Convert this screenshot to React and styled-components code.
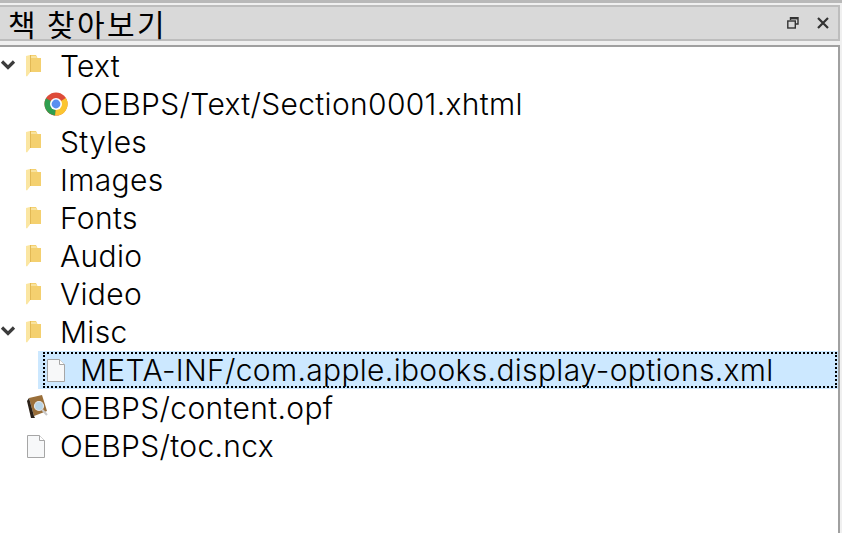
import styled, { createGlobalStyle } from "styled-components";

const Global = createGlobalStyle`
  html, body { margin: 0; padding: 0; background: #f0f0f0; }
  body { font-family: "Inter", "Noto Sans CJK KR", sans-serif; }
`;

const Dock = styled.div`
  width: 842px;
  height: 533px;
  display: flex;
  flex-direction: column;
  overflow: hidden;
  background: #f0f0f0;
  border-top: 3px solid #b9b9b9;
  box-sizing: border-box;
`;

const TitleBar = styled.div`
  height: 36px;
  margin-top: 2px;
  margin-right: 2px;
  display: flex;
  align-items: center;
  background: #d9d9d9;
  border: 2px solid #bdbdbd;
  border-left: 0;
  box-sizing: border-box;
  flex: none;
`;

const Title = styled.h1`
  flex: 1;
  margin: 0;
  padding-left: 8px;
  font: 400 30px/32px "Noto Sans CJK KR", sans-serif;
  letter-spacing: 2.4px;
  color: #000;
`;

const TitleButton = styled.button`
  width: 30px;
  height: 30px;
  padding: 0;
  border: 0;
  background: none;
  display: flex;
  align-items: center;
  justify-content: center;
`;

const Tree = styled.ul`
  flex: 1;
  list-style: none;
  margin: 4px 2px 0 0;
  padding: 0;
  background: #fff;
  border-top: 2px solid #a0a0a0;
  border-right: 2px solid #a0a0a0;
`;

const Row = styled.li`
  height: 38px;
  display: flex;
  align-items: center;
  padding-left: ${(p) => (p.$child ? 38 : 0)}px;
  box-sizing: border-box;
  color: #000;
`;

const RowInner = styled.div`
  position: relative;
  flex: 1;
  height: 38px;
  display: flex;
  align-items: center;
  box-sizing: border-box;
  background: ${(p) => (p.$selected ? "#cce8ff" : "transparent")};

  &::after {
    content: "";
    display: ${(p) => (p.$selected ? "block" : "none")};
    position: absolute;
    inset: 1px 1px 1px 5px;
    border: 2px dotted #000;
  }
`;

const Arrow = styled.span`
  width: 25px;
  height: 38px;
  flex: none;
  display: flex;
  align-items: center;
  padding: 0 0 3px 0;
  box-sizing: border-box;
`;

const IconSlot = styled.span`
  width: ${(p) => (p.$child ? 42 : 35)}px;
  flex: none;
  display: flex;
  align-items: center;
  padding-left: ${(p) => p.$inset}px;
  box-sizing: border-box;
`;

const Label = styled.span`
  font-size: 30px;
  font-weight: 300;
  line-height: 38px;
  letter-spacing: 0.33px;
  white-space: nowrap;
`;

const Chevron = () => (
  <svg width="16" height="10" viewBox="0 0 16 10">
    <path d="M2 1.5 L8 7.5 L14 1.5" fill="none" stroke="#3c3c3c" strokeWidth="3.2" />
  </svg>
);

const FolderIcon = () => (
  <svg width="16" height="22" viewBox="0 0 16 22">
    <path d="M5 0 H11 L12.5 3 H16 V17 H5 Z" fill="#f4d06f" />
    <path d="M5 1 H11 L12 3 H5 Z" fill="#f8e3a0" />
    <path d="M1 1 L5 0 V17.5 L2 21.5 L1 21 Z" fill="#fbe6a2" />
    <path d="M5 0 L6 0 V17 H5 Z" fill="#e2b955" />
  </svg>
);

const FileIcon = () => (
  <svg width="18" height="23" viewBox="0 0 18 23">
    <path d="M0.5 0.5 H12.5 L17.5 5.5 V22.5 H0.5 Z" fill="#f7f8f9" stroke="#a6a6a6" />
    <path d="M12.5 0.5 V5.5 H17.5" fill="#fff" stroke="#a6a6a6" />
  </svg>
);

const ChromeIcon = () => (
  <svg width="24" height="24" viewBox="0 0 24 24">
    <circle cx="12" cy="12" r="11.5" fill="#dd4b39" />
    <path d="M12 12 L21.9 6 A11.5 11.5 0 0 1 11 23.5 Z" fill="#fbc531" />
    <path d="M12 12 L11 23.5 A11.5 11.5 0 0 1 2 6.3 Z" fill="#2f9e4f" />
    <circle cx="12" cy="12" r="6" fill="#fff" />
    <circle cx="12" cy="12" r="4.4" fill="#5a8ff0" />
  </svg>
);

const OpfIcon = () => (
  <svg width="24" height="26" viewBox="0 0 24 26">
    <path d="M3 3 L16 0 L21 16 L8 21 Z" fill="#9a6f3a" />
    <path d="M3 3 L8 21 L9 23 L5 23 L1 6 Z" fill="#2b2118" />
    <circle cx="13" cy="11" r="4.5" fill="#b8d4e6" stroke="#e6e6e6" strokeWidth="1.2" />
    <path d="M16 14.5 L21 20" stroke="#c8c8c8" strokeWidth="2" />
  </svg>
);

const rows = [
  { label: "Text", icon: <FolderIcon />, open: true, inset: 0 },
  { label: "OEBPS/Text/Section0001.xhtml", icon: <ChromeIcon />, child: true, inset: 6 },
  { label: "Styles", icon: <FolderIcon />, inset: 0 },
  { label: "Images", icon: <FolderIcon />, inset: 0 },
  { label: "Fonts", icon: <FolderIcon />, inset: 0 },
  { label: "Audio", icon: <FolderIcon />, inset: 0 },
  { label: "Video", icon: <FolderIcon />, inset: 0 },
  { label: "Misc", icon: <FolderIcon />, open: true, inset: 0 },
  { label: "META-INF/com.apple.ibooks.display-options.xml", icon: <FileIcon />, child: true, selected: true, inset: 9 },
  { label: "OEBPS/content.opf", icon: <OpfIcon />, inset: 1 },
  { label: "OEBPS/toc.ncx", icon: <FileIcon />, inset: 2 },
];

export default function App() {
  return (
    <Dock>
      <Global />
      <TitleBar>
        <Title>책 찾아보기</Title>
        <TitleButton aria-label="float">
          <svg width="12" height="12" viewBox="0 0 12 12">
            <path d="M3.5 3 V0.8 H11 V7 H8.5" fill="none" stroke="#333" strokeWidth="1.4" />
            <path d="M3.5 1.6 H11" stroke="#333" strokeWidth="1.6" />
            <rect x="0.8" y="4" width="7.5" height="7" fill="none" stroke="#333" strokeWidth="1.4" />
          </svg>
        </TitleButton>
        <TitleButton aria-label="close">
          <svg width="12" height="12" viewBox="0 0 12 12">
            <path d="M1 1 L11 11 M11 1 L1 11" stroke="#333" strokeWidth="2.2" />
          </svg>
        </TitleButton>
      </TitleBar>
      <Tree>
        {rows.map((row) =>
          row.child ? (
            <Row key={row.label} $child>
              <RowInner $selected={row.selected}>
                <IconSlot $child $inset={row.inset}>{row.icon}</IconSlot>
                <Label>{row.label}</Label>
              </RowInner>
            </Row>
          ) : (
            <Row key={row.label}>
              <Arrow>{row.open && <Chevron />}</Arrow>
              <IconSlot $inset={row.inset}>{row.icon}</IconSlot>
              <Label>{row.label}</Label>
            </Row>
          )
        )}
      </Tree>
    </Dock>
  );
}
